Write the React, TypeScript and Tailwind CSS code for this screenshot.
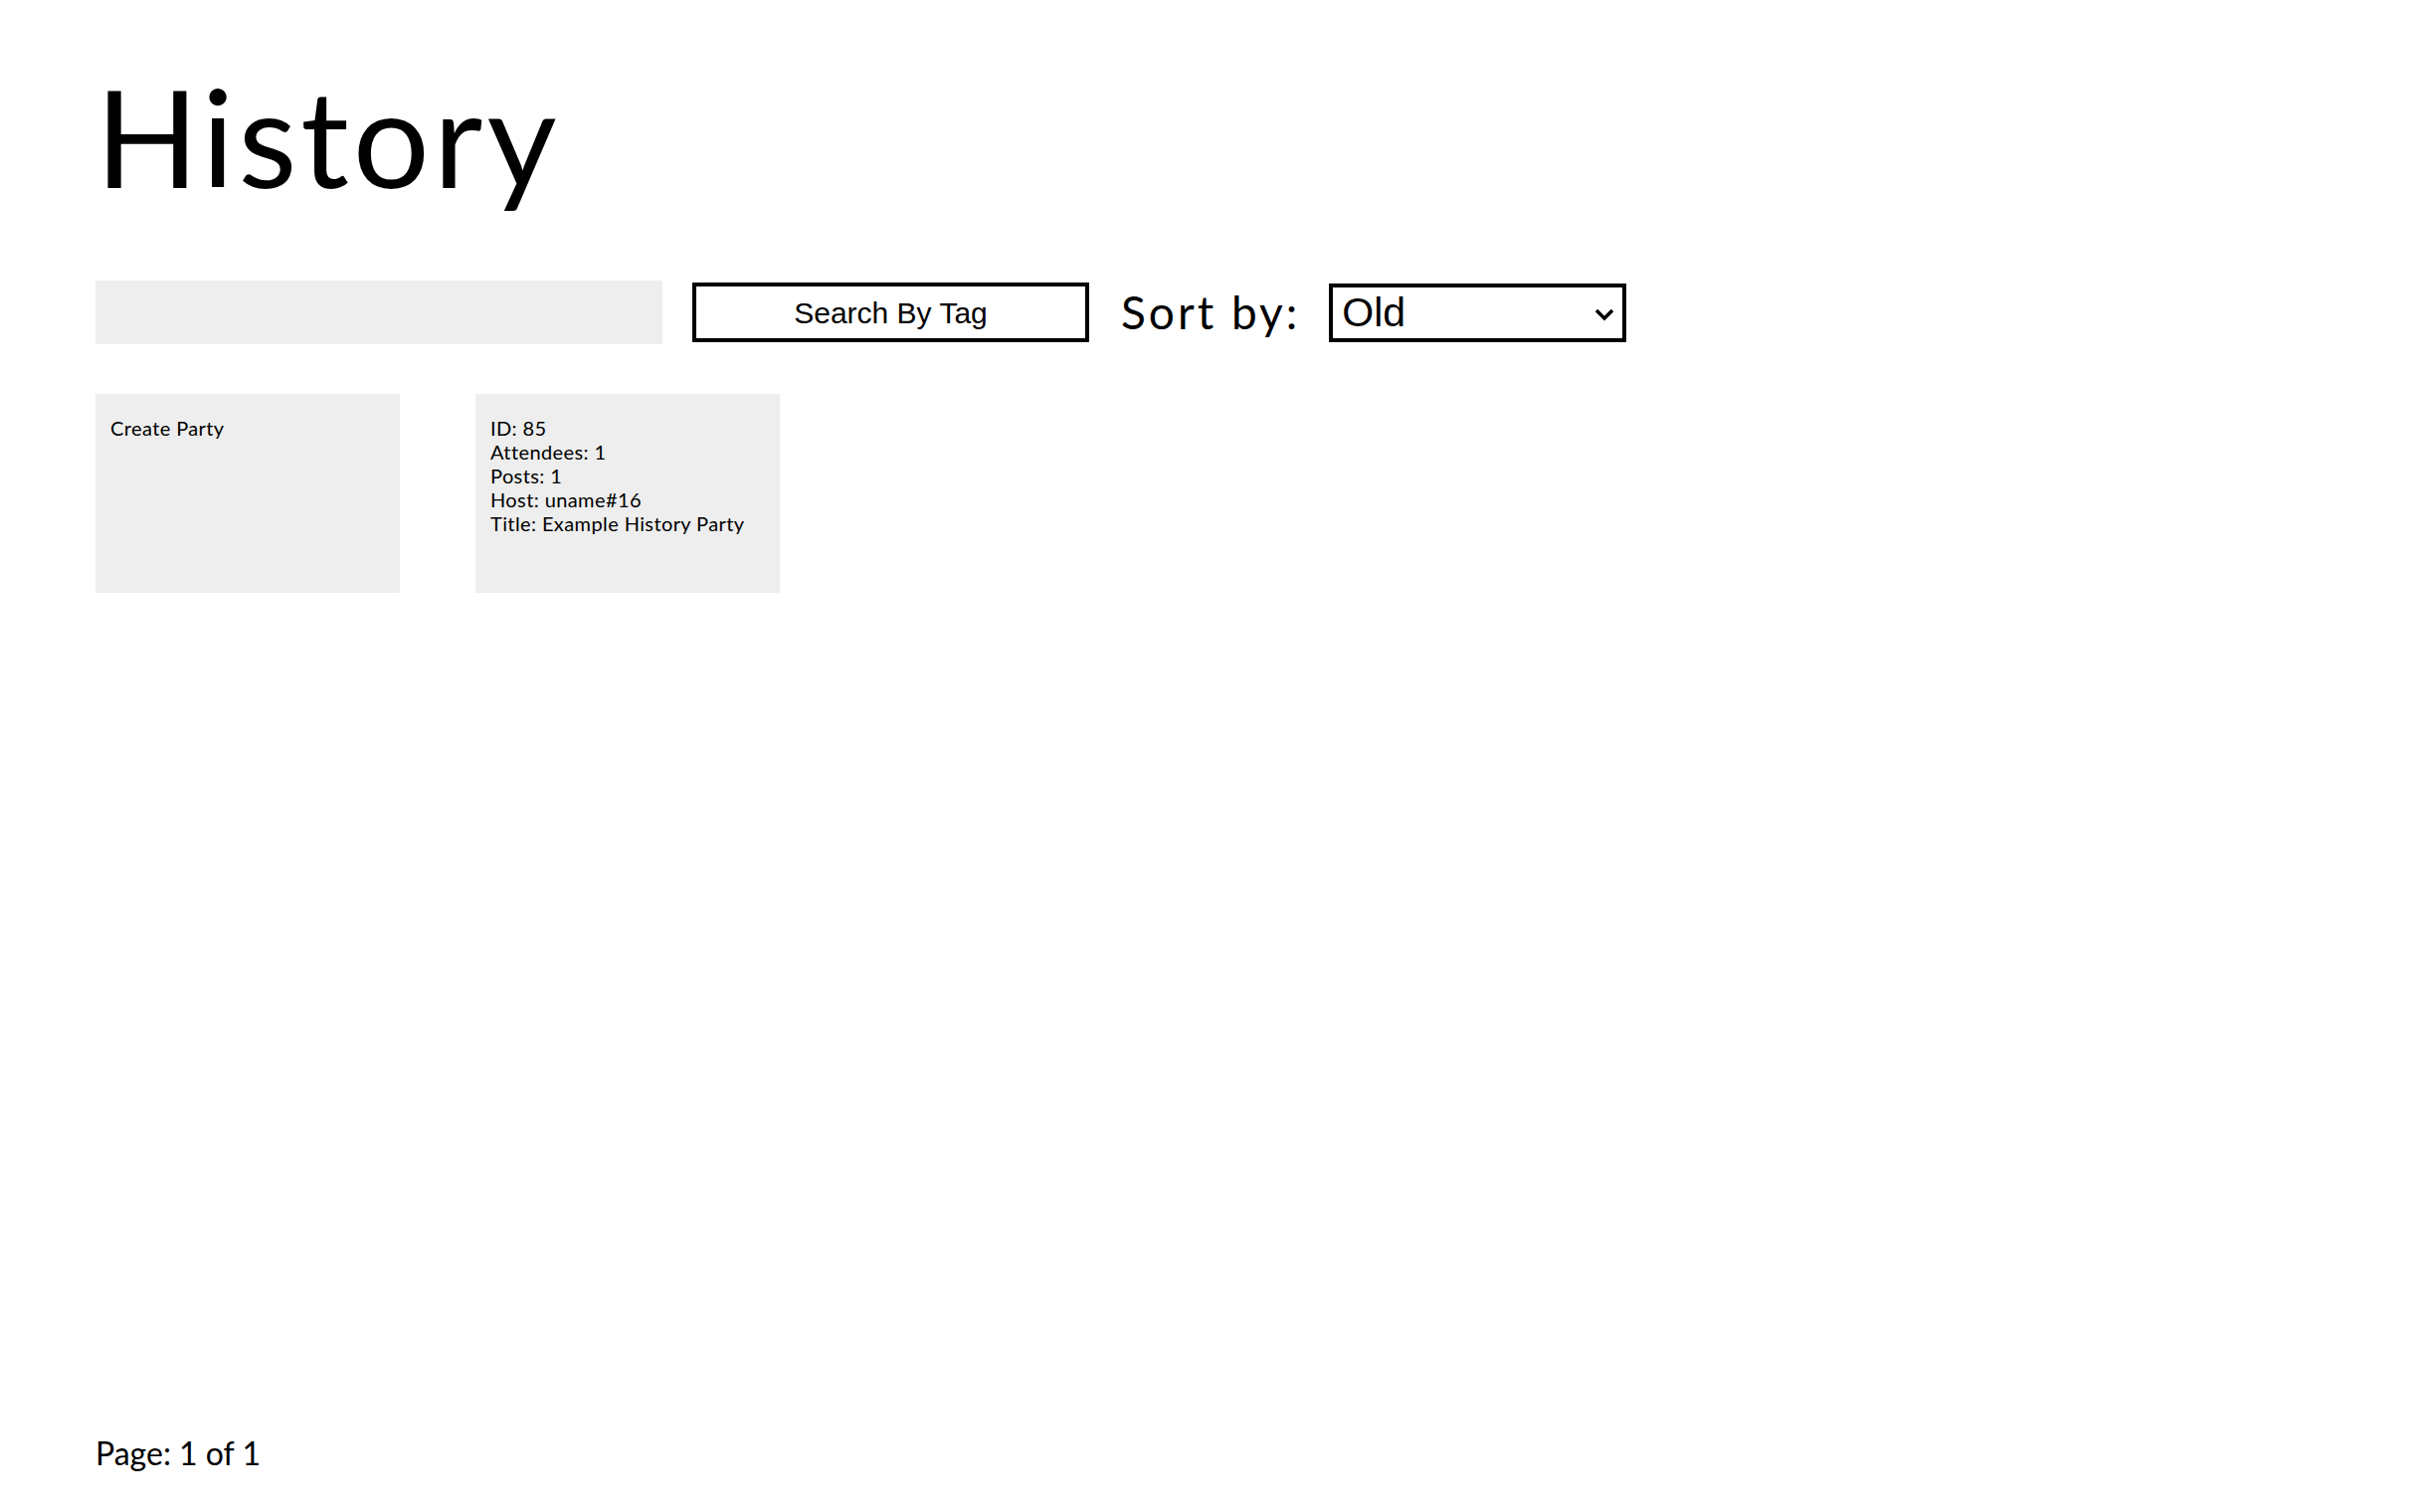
import React from "react";

export default function App() {
  const q = { fontFamily: "Lato, 'Noto Sans', sans-serif" };
  return (
    <div className="min-h-screen w-full bg-white text-black flex flex-col pl-[96px]" style={q}>
      <h1 className="mt-[69px] text-[136px] leading-none font-normal tracking-[4px]">History</h1>
      <div className="mt-[77px] flex items-center h-[64px]">
        <input className="w-[570px] h-[64px] bg-[#eeeeee] outline-none border-0" />
        <button
          className="ml-[30px] w-[399px] h-[60px] border-[4px] border-black bg-white text-[30px] text-black"
          style={{ fontFamily: "'Liberation Sans', Arial, sans-serif" }}
        >
          Search By Tag
        </button>
        <span className="ml-[32px] text-[46px] leading-none tracking-[3px]">Sort by:</span>
        <div className="ml-[29px] relative w-[299px] h-[59px] border-[4px] border-black bg-white flex items-center">
          <span
            className="pl-[9px] text-[41px] leading-none"
            style={{ fontFamily: "'Liberation Sans', Arial, sans-serif" }}
          >
            Old
          </span>
          <svg className="absolute right-[8px] top-[20px]" width="20" height="14" viewBox="0 0 20 14">
            <path d="M2 3 L10 11 L18 3" fill="none" stroke="black" strokeWidth="3.5" />
          </svg>
        </div>
      </div>
      <div className="mt-[50px] flex gap-[76px]">
        <div className="w-[306px] h-[200px] bg-[#eeeeee] px-[15px] pt-[22px] text-[20px] leading-[24px] tracking-[0.4px]">
          Create Party
        </div>
        <div className="w-[306px] h-[200px] bg-[#eeeeee] px-[15px] pt-[22px] text-[20px] leading-[24px] tracking-[0.4px]">
          <div>ID: 85</div>
          <div>Attendees: 1</div>
          <div>Posts: 1</div>
          <div>Host: uname#16</div>
          <div>Title: Example History Party</div>
        </div>
      </div>
      <div className="mt-auto mb-[43px] text-[32px] leading-none">Page: 1 of 1</div>
    </div>
  );
}
